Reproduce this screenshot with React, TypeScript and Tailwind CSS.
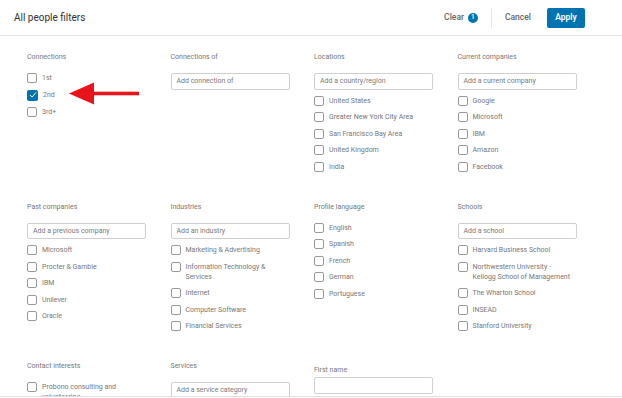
import React from 'react';

type Item = { label: string; checked?: boolean };

interface Section {
  title: string;
  placeholder?: string;
  items?: Item[];
  variant?: 'shifted';
}

const rows: Section[][] = [
  [
    { title: 'Connections', items: [{ label: '1st' }, { label: '2nd', checked: true }, { label: '3rd+' }] },
    { title: 'Connections of', placeholder: 'Add connection of' },
    {
      title: 'Locations',
      placeholder: 'Add a country/region',
      items: [
        { label: 'United States' },
        { label: 'Greater New York City Area' },
        { label: 'San Francisco Bay Area' },
        { label: 'United Kingdom' },
        { label: 'India' },
      ],
    },
    {
      title: 'Current companies',
      placeholder: 'Add a current company',
      items: [{ label: 'Google' }, { label: 'Microsoft' }, { label: 'IBM' }, { label: 'Amazon' }, { label: 'Facebook' }],
    },
  ],
  [
    {
      title: 'Past companies',
      placeholder: 'Add a previous company',
      items: [
        { label: 'Microsoft' },
        { label: 'Procter & Gamble' },
        { label: 'IBM' },
        { label: 'Unilever' },
        { label: 'Oracle' },
      ],
    },
    {
      title: 'Industries',
      placeholder: 'Add an industry',
      items: [
        { label: 'Marketing & Advertising' },
        { label: 'Information Technology &\nServices' },
        { label: 'Internet' },
        { label: 'Computer Software' },
        { label: 'Financial Services' },
      ],
    },
    {
      title: 'Profile language',
      items: [{ label: 'English' }, { label: 'Spanish' }, { label: 'French' }, { label: 'German' }, { label: 'Portuguese' }],
    },
    {
      title: 'Schools',
      placeholder: 'Add a school',
      items: [
        { label: 'Harvard Business School' },
        { label: 'Northwestern University -\nKellogg School of Management' },
        { label: 'The Wharton School' },
        { label: 'INSEAD' },
        { label: 'Stanford University' },
      ],
    },
  ],
  [
    { title: 'Contact interests', items: [{ label: 'Probono consulting and\nvolunteering' }] },
    { title: 'Services', placeholder: 'Add a service category' },
    { title: 'First name', placeholder: '', variant: 'shifted' },
  ],
];

function Checkbox({ checked }: { checked?: boolean }) {
  if (checked) {
    return (
      <span className="flex h-[11px] w-[11px] shrink-0 items-center justify-center rounded-[2px] bg-[#0073b1]">
        <svg width="8" height="8" viewBox="0 0 8 8" fill="none">
          <path d="M1.2 4.2 L3.1 6.1 L6.9 1.6" stroke="white" strokeWidth="1" strokeLinecap="round" strokeLinejoin="round" />
        </svg>
      </span>
    );
  }
  return <span className="h-[10px] w-[10px] shrink-0 rounded-[2px] border border-[#999] bg-white" />;
}

function FilterSection({ section }: { section: Section }) {
  const shifted = section.variant === 'shifted';
  return (
    <div className={`flex w-[119px] flex-col ${shifted ? 'pt-[4px]' : ''}`}>
      <div className={`text-[7px] leading-[10px] text-[#777] ${shifted ? 'mb-[2px]' : 'mb-[11px]'}`}>{section.title}</div>
      {section.placeholder !== undefined && (
        <div className="mb-[6px] flex h-[16.5px] w-[119px] items-center rounded-[2px] border border-[#cfcfcf] px-[5px] text-[7px] text-[#7a7a7a]">
          {section.placeholder}
        </div>
      )}
      {section.items && (
        <div className="flex flex-col gap-[6.5px]">
          {section.items.map((item) => (
            <div key={item.label} className="flex items-start gap-[5px]">
              <Checkbox checked={item.checked} />
              <span className="whitespace-pre-line text-[7px] leading-[10px] text-[#777]">{item.label}</span>
            </div>
          ))}
        </div>
      )}
    </div>
  );
}

export default function App() {
  return (
    <div className="relative h-[398px] w-[622px] overflow-hidden bg-white font-['Roboto','Liberation_Sans',sans-serif]">
      <header className="flex h-[36px] items-center border-b border-[#e6e6e6] pl-[14px] pr-[37px]">
        <h1 className="flex-1 text-[10px] font-normal text-[#333]">All people filters</h1>
        <button className="flex items-center text-[8.5px] font-medium text-[#666]">
          Clear
          <span className="ml-[4px] flex h-[10px] w-[10px] items-center justify-center rounded-full bg-[#0073b1] text-[6.5px] font-semibold text-white">
            1
          </span>
        </button>
        <span className="ml-[13px] h-[20px] w-px bg-[#e6e6e6]" />
        <button className="ml-[13px] text-[8.5px] font-medium text-[#666]">Cancel</button>
        <button className="ml-[16px] h-[20px] w-[38px] rounded-[2px] bg-[#0073b1] text-[8.5px] font-semibold text-white">Apply</button>
      </header>

      <main className="h-[360px] overflow-hidden pl-[27px] pt-[16px]">
        <div className="grid w-[574px] grid-cols-4 gap-y-[30px]">
          {rows.map((row, r) =>
            row.map((section) => <FilterSection key={`${r}-${section.title}`} section={section} />)
          )}
        </div>
      </main>
      <div className="h-px w-full bg-[#e0e0e0]" />

      <svg className="absolute left-[69px] top-[82px]" width="71" height="23" viewBox="0 0 71 23">
        <polygon points="0,11.5 25,0.5 25,22.5" fill="#e8141b" />
        <rect x="24" y="9.7" width="46" height="3.6" fill="#e8141b" />
      </svg>
    </div>
  );
}
